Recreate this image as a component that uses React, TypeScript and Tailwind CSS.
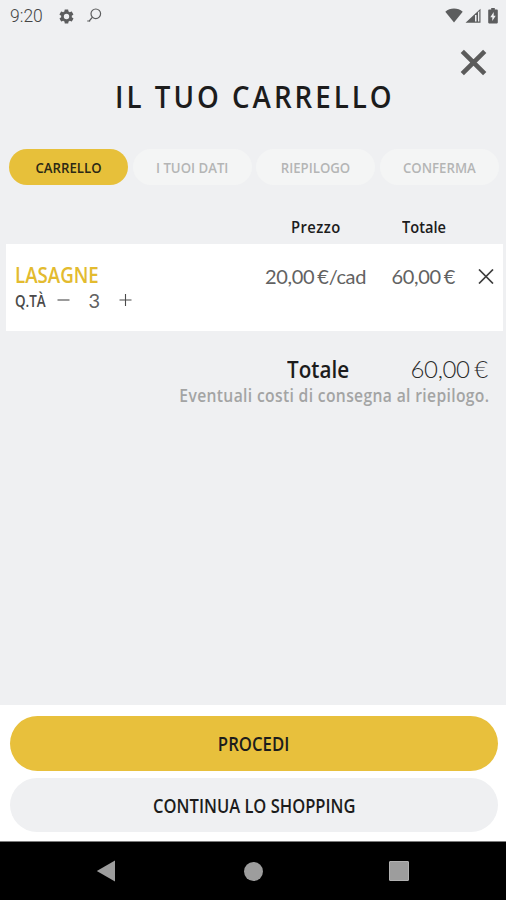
import { ReactNode, useState } from 'react';
import clsx from 'clsx';

const steps = ['CARRELLO', 'I TUOI DATI', 'RIEPILOGO', 'CONFERMA'];

const lato = "font-['Lato',sans-serif]";
const latoSmall = 'font-normal text-[20px] text-[#626262] tracking-[-0.35px] [word-spacing:-1.6px]';

function formatPrice(value: number) {
  return value.toFixed(2).replace('.', ',') + ' €';
}

// Slightly narrowed heading face used for all labels
function Label({ className, children }: { className?: string; children: ReactNode }) {
  return (
    <span
      className={clsx("inline-block font-['Open_Sans',sans-serif] font-[650] whitespace-nowrap", className)}
    >
      {children}
    </span>
  );
}

function StatusBar() {
  return (
    <div className="flex h-8 items-center pl-[10px] pr-[8px] text-[#5c5d5e]">
      <span className="w-[48px] font-['Roboto',sans-serif] text-[17.5px] leading-8 font-light text-[#444]">
        9:20
      </span>
      <svg className="h-[17px] w-[17px]" viewBox="0 0 24 24" fill="currentColor">
        <path d="M19.4 13c0-.3.1-.6.1-1s0-.7-.1-1l2.1-1.6c.2-.2.2-.4.1-.6l-2-3.5c-.1-.2-.4-.3-.6-.2l-2.5 1c-.5-.4-1.1-.7-1.7-1l-.4-2.6c0-.3-.2-.5-.5-.5h-4c-.2 0-.4.2-.5.4l-.4 2.7c-.6.2-1.2.6-1.7 1l-2.5-1c-.2-.1-.5 0-.6.2l-2 3.5c-.1.2-.1.5.1.6L4.5 11a8 8 0 0 0 0 2l-2.1 1.6c-.2.2-.2.4-.1.6l2 3.5c.1.2.4.3.6.2l2.5-1c.5.4 1.1.7 1.7 1l.4 2.6c0 .3.2.5.5.5h4c.2 0 .4-.2.5-.4l.4-2.7c.6-.2 1.2-.6 1.7-1l2.5 1c.2.1.5 0 .6-.2l2-3.5c.1-.2.1-.5-.1-.6L19.4 13zM12 15.8a3.8 3.8 0 1 1 0-7.6 3.8 3.8 0 0 1 0 7.6z" />
      </svg>
      <svg className="ml-[11px] h-4 w-4" viewBox="0 0 16 16" fill="none" stroke="currentColor" strokeWidth="1.2">
        <circle cx="9.8" cy="5.8" r="4.8" />
        <path d="M6.5 9.2 2.8 13.5M1.2 13h3" />
      </svg>
      <div className="ml-auto flex items-center">
        <svg className="h-4 w-[18px]" viewBox="0 0 18 16" fill="currentColor">
          <path d="M9 14.5.3 3.7C2.7 1.7 5.7.6 9 .6s6.3 1.1 8.7 3.1z" />
        </svg>
        <svg className="ml-[2px] h-4 w-4" viewBox="0 0 16 16" fill="currentColor" fillRule="evenodd">
          <path d="M.5 14.7 15.5.7v14zM10 7v6.5h1.5V7zM13 4.2v9.3h1.3V3z" />
        </svg>
        <svg className="ml-[7px] h-4 w-[10px]" viewBox="0 0 10 16" fill="currentColor" fillRule="evenodd">
          <path d="M3.2 0h3.6v1.6H9c.5 0 .8.3.8.8v12.2c0 .5-.3.8-.8.8H1c-.5 0-.8-.3-.8-.8V2.4c0-.5.3-.8.8-.8h2.2zM5.7 4 2.3 9.3h2V13l3.4-5.2h-2z" />
        </svg>
      </div>
    </div>
  );
}

function Steps({ active }: { active: number }) {
  return (
    <div className="flex h-9 gap-[4.6px] pr-[7px] pl-[9px]">
      {steps.map((step, i) => (
        <div
          key={step}
          className={clsx(
            'flex-1 rounded-full text-center text-[15px] leading-9',
            i === active ? 'bg-[#e7c03a] text-[#2b2815]' : 'bg-[#f4f5f5] text-[#b4b5b5]'
          )}
        >
          <Label className="-mx-4 scale-x-[0.88]">{step}</Label>
        </div>
      ))}
    </div>
  );
}

function NavigationBar() {
  return (
    <div className="flex h-[59px] items-center border-t border-[#7c7c7c] bg-black text-[#9d9d9d]">
      <svg className="ml-[96px] h-[22px] w-[20px]" viewBox="0 0 20 22" fill="currentColor">
        <path d="M.8 11 19 .5v21z" />
      </svg>
      <div className="ml-[128px] h-[19px] w-[19px] rounded-full bg-[#9d9d9d]" />
      <div className="ml-[126px] h-[20px] w-[20px] rounded-[1px] border border-[#b2b2b2] bg-[#9d9d9d]" />
    </div>
  );
}

export default function App() {
  const [quantity, setQuantity] = useState(3);
  const price = 20;
  const total = formatPrice(price * quantity);

  return (
    <div className="flex h-[900px] w-[506px] flex-col overflow-hidden bg-[#eff0f2] text-[#1c1c1c]">
      <StatusBar />

      <div className="flex h-[42px] justify-end pt-[17px] pr-[19px]">
        <button aria-label="Chiudi" className="h-[27px] w-[27px] text-[#5b5b5b]">
          <svg viewBox="0 0 27 27" fill="none" stroke="currentColor" strokeWidth="4.6">
            <path d="M2.3 2.3 24.7 24.7M24.7 2.3 2.3 24.7" />
          </svg>
        </button>
      </div>

      <h1 className="mb-[31px] pl-[3px] text-center text-[31.5px] leading-[44px]">
        <Label className="scale-x-[0.88] tracking-[3.4px]">IL TUO CARRELLO</Label>
      </h1>

      <Steps active={0} />

      <div className="mt-[26px] flex h-[33px] pl-[291px] text-[17px] leading-[31px]">
        <span className="w-[111px]">
          <Label className="origin-left scale-x-[0.87] tracking-[0.5px]">Prezzo</Label>
        </span>
        <Label className="origin-left scale-x-[0.86]">Totale</Label>
      </div>

      <div className="mr-[3px] ml-[6px] flex h-[87px] bg-white pt-[18px] pl-[9px]">
        <div className="w-[250px]">
          <p className="text-[21px] leading-[27px] text-[#e3bb2f]">
            <Label className="origin-left scale-x-[0.89]">LASAGNE</Label>
          </p>
          <div className="-mt-px flex h-6 items-center text-[#4a4a4a]">
            <span className="w-[41.5px] text-[17px] leading-[25px]">
              <Label className="origin-left scale-x-[0.79]">Q.TÀ</Label>
            </span>
            <button aria-label="Meno" className="h-3 w-[13px]" onClick={() => setQuantity(Math.max(1, quantity - 1))}>
              <svg viewBox="0 0 13 12" stroke="currentColor" strokeWidth="1.1">
                <path d="M.5 6h12" />
              </svg>
            </button>
            <span className={clsx(lato, latoSmall, 'w-[49px] text-center leading-6')}>{quantity}</span>
            <button aria-label="Più" className="h-3 w-[13px]" onClick={() => setQuantity(quantity + 1)}>
              <svg viewBox="0 0 13 12" stroke="currentColor" strokeWidth="1.1">
                <path d="M.5 6h12M6.5 0v12" />
              </svg>
            </button>
          </div>
        </div>
        <span className={clsx(lato, latoSmall, 'w-[126.5px] leading-[28px]')}>{formatPrice(price)}/cad</span>
        <span className={clsx(lato, latoSmall, 'w-[86.5px] leading-[28px]')}>{total}</span>
        <button aria-label="Rimuovi" className="mt-[7px] h-[15px] w-[16px] text-[#3d3d3d]">
          <svg viewBox="0 0 16 15" stroke="currentColor" strokeWidth="1.7">
            <path d="M1 .5 15 14.5M15 .5 1 14.5" />
          </svg>
        </button>
      </div>

      <div className="mt-[22px] flex h-[32px] pl-[286.5px]">
        <span className="w-[124px] text-[24px] leading-8">
          <Label className="origin-left scale-x-[0.86]">Totale</Label>
        </span>
        <span
          className={clsx(lato, 'text-[24px] leading-[31px] font-light tracking-[-0.35px] text-[#2a2a2a] [word-spacing:-1.5px]')}
        >
          {total}
        </span>
      </div>
      <p className="pr-[17px] text-right text-[18px] leading-[20px] text-[#a3a4a4]">
        <Label className="origin-right scale-x-[0.87] tracking-[0.4px]">
          Eventuali costi di consegna al riepilogo.
        </Label>
      </p>

      <div className="mt-auto flex h-[136px] flex-col gap-[7px] bg-white pt-[11px] pr-[8px] pl-[10px]">
        <button className="h-[55px] rounded-full bg-[#e8c03c] pt-[2px] text-[19px]">
          <Label className="scale-x-[0.88]">PROCEDI</Label>
        </button>
        <button className="h-[54px] rounded-full bg-[#eff0f2] pt-[2px] text-[19px]">
          <Label className="scale-x-[0.87]">CONTINUA LO SHOPPING</Label>
        </button>
      </div>
      <NavigationBar />
    </div>
  );
}
